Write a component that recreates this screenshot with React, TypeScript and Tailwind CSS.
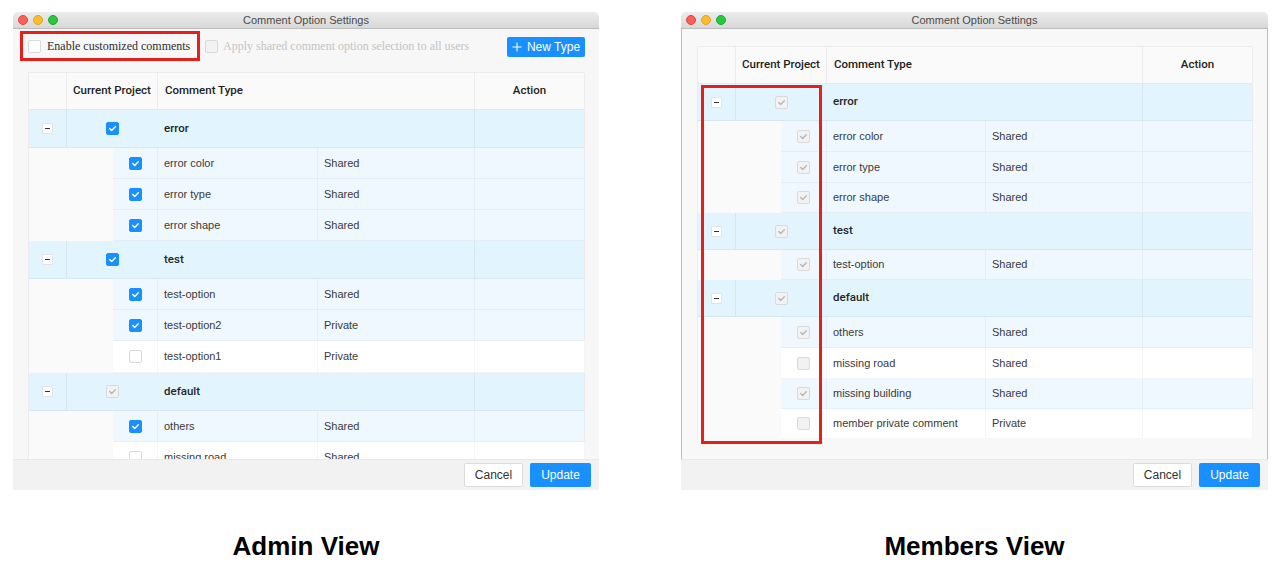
import React from "react";

type CB = "checked" | "unchecked" | "dchecked" | "dunchecked";

const SANS = "font-['Liberation_Sans',Arial,sans-serif]";
const MED = "font-['Roboto','Liberation_Sans',Arial,sans-serif] font-medium";

function Checkbox({ state }: { state: CB }) {
  const cls =
    state === "checked"
      ? "bg-[#1890ff] border-[#1890ff]"
      : state === "unchecked"
      ? "bg-white border-[#d9d9d9]"
      : "bg-[#f2f2f2] border-[#dadada]";
  const showCheck = state === "checked" || state === "dchecked";
  return (
    <span className={`w-[13px] h-[13px] rounded-[2px] border flex items-center justify-center shrink-0 ${cls}`}>
      {showCheck && (
        <svg width="9" height="9" viewBox="0 0 9 9">
          <path
            d="M1.7 4.6 L3.7 6.5 L7.3 2.7"
            fill="none"
            stroke={state === "checked" ? "#ffffff" : "#b8b8b8"}
            strokeWidth="1.4"
            strokeLinecap="round"
            strokeLinejoin="round"
          />
        </svg>
      )}
    </span>
  );
}

function Minus() {
  return (
    <span className="w-[11px] h-[11px] bg-white border border-[#e3e3e3] rounded-[1px] flex items-center justify-center">
      <span className="w-[5px] h-px bg-[#333]" />
    </span>
  );
}

type Widths = { c1: number; c2: number; c3: number; c4: number; c5: number; e: number; cb: number };

type Sub = { name: string; type: string; state: CB; h: number };
type Group = { name: string; state: CB; h: number; subs: Sub[] };

function Table({ w, groups }: { w: Widths; groups: Group[] }) {
  const total = w.c1 + w.c2 + w.c3 + w.c4 + w.c5;
  return (
    <div className={`${SANS} text-[11px] text-[#3a3a3a] border-l border-t border-[#ececec]`} style={{ width: total }}>
      <div className={`flex h-[37px] bg-[#fafafa] border-b border-[#e8e8e8] text-[#222] ${MED} text-[11.5px]`}>
        <div className="border-r border-[#ececec] shrink-0" style={{ width: w.c1 }} />
        <div className="border-r border-[#ececec] shrink-0 flex items-center justify-center" style={{ width: w.c2 }}>
          Current Project
        </div>
        <div className="border-r border-[#ececec] shrink-0 flex items-center pl-[7px]" style={{ width: w.c3 + w.c4 }}>
          Comment Type
        </div>
        <div className="shrink-0 flex items-center justify-center border-r border-[#ececec]" style={{ width: w.c5 }}>
          Action
        </div>
      </div>
      {groups.map((g) => (
        <React.Fragment key={g.name}>
          <div className="flex bg-[#e2f4fd]" style={{ height: g.h }}>
            <div className="border-r border-b border-black/[0.05] shrink-0 flex items-center justify-center" style={{ width: w.c1 }}>
              <Minus />
            </div>
            <div className="border-b border-black/[0.05] shrink-0 flex items-center justify-center" style={{ width: w.c2 }}>
              <Checkbox state={g.state} />
            </div>
            <div className={`border-r border-b border-black/[0.05] shrink-0 flex items-center pl-[6px] text-[#262626] ${MED} text-[11.5px]`} style={{ width: w.c3 + w.c4 }}>
              {g.name}
            </div>
            <div className="border-b border-r border-black/[0.05] shrink-0" style={{ width: w.c5 }} />
          </div>
          {g.subs.map((s) => {
            const bg = s.state === "checked" || s.state === "dchecked" ? "bg-[#eff8fe]" : "bg-white";
            return (
              <div key={s.name} className="flex" style={{ height: s.h }}>
                <div className="bg-[#fafafa] shrink-0" style={{ width: w.e }} />
                <div className={`${bg} border-r border-b border-black/[0.04] shrink-0 flex items-center justify-center`} style={{ width: w.cb }}>
                  <Checkbox state={s.state} />
                </div>
                <div className={`${bg} border-r border-b border-black/[0.04] shrink-0 flex items-center pl-[6px]`} style={{ width: w.c3 }}>
                  {s.name}
                </div>
                <div className={`${bg} border-r border-b border-black/[0.04] shrink-0 flex items-center pl-[6px]`} style={{ width: w.c4 }}>
                  {s.type}
                </div>
                <div className={`${bg} border-r border-b border-black/[0.04] shrink-0`} style={{ width: w.c5 }} />
              </div>
            );
          })}
        </React.Fragment>
      ))}
    </div>
  );
}

function TitleBar() {
  return (
    <div className={`${SANS} h-[17px] shrink-0 grid grid-cols-[1fr_auto_1fr] items-center bg-gradient-to-b from-[#ececec] to-[#d8d8d8] border-b border-[#bcbcbc] rounded-t-[5px]`}>
      <div className="flex items-center gap-[5px] pl-[5px]">
        <span className="w-[10px] h-[10px] rounded-full bg-[#fc5f57] border border-[#e0443e]" />
        <span className="w-[10px] h-[10px] rounded-full bg-[#fdbc2e] border border-[#dea123]" />
        <span className="w-[10px] h-[10px] rounded-full bg-[#28c840] border border-[#1aab29]" />
      </div>
      <div className="text-[11px] text-[#4b4b4b] leading-none">Comment Option Settings</div>
      <div />
    </div>
  );
}

function Footer() {
  return (
    <div className={`${SANS} h-[31px] shrink-0 bg-[#f2f2f2] border-t border-[#e9e9e9] flex items-center justify-end gap-[7px] pr-[8px] text-[12px]`}>
      <button className="h-[24px] w-[59px] bg-white border border-[#dcdcdc] rounded-[2px] text-[#333]">Cancel</button>
      <button className="h-[24px] w-[61px] bg-[#1890ff] rounded-[2px] text-white">Update</button>
    </div>
  );
}

const leftGroups: Group[] = [
  {
    name: "error",
    state: "checked",
    h: 38,
    subs: [
      { name: "error color", type: "Shared", state: "checked", h: 31 },
      { name: "error type", type: "Shared", state: "checked", h: 31 },
      { name: "error shape", type: "Shared", state: "checked", h: 31 },
    ],
  },
  {
    name: "test",
    state: "checked",
    h: 38,
    subs: [
      { name: "test-option", type: "Shared", state: "checked", h: 31 },
      { name: "test-option2", type: "Private", state: "checked", h: 31 },
      { name: "test-option1", type: "Private", state: "unchecked", h: 32 },
    ],
  },
  {
    name: "default",
    state: "dchecked",
    h: 38,
    subs: [
      { name: "others", type: "Shared", state: "checked", h: 31 },
      { name: "missing road", type: "Shared", state: "unchecked", h: 31 },
    ],
  },
];

const rightGroups: Group[] = [
  {
    name: "error",
    state: "dchecked",
    h: 37,
    subs: [
      { name: "error color", type: "Shared", state: "dchecked", h: 31 },
      { name: "error type", type: "Shared", state: "dchecked", h: 31 },
      { name: "error shape", type: "Shared", state: "dchecked", h: 30 },
    ],
  },
  {
    name: "test",
    state: "dchecked",
    h: 37,
    subs: [{ name: "test-option", type: "Shared", state: "dchecked", h: 30 }],
  },
  {
    name: "default",
    state: "dchecked",
    h: 37,
    subs: [
      { name: "others", type: "Shared", state: "dchecked", h: 31 },
      { name: "missing road", type: "Shared", state: "dunchecked", h: 31 },
      { name: "missing building", type: "Shared", state: "dchecked", h: 30 },
      { name: "member private comment", type: "Private", state: "dunchecked", h: 30 },
    ],
  },
];

function AdminWindow() {
  return (
    <div className="w-[586px] h-[478px] flex flex-col">
      <TitleBar />
      <div className="flex-1 bg-[#f7f7f7] flex flex-col min-h-0">
        <div className="h-[43px] shrink-0 flex items-start pt-[2px] pl-[7px] pr-[14px]">
          <div className="h-[30px] w-[180px] border-[3px] border-[#e5201b] flex items-center pl-[5px] gap-[6px]">
            <Checkbox state="unchecked" />
            <span className="font-['Liberation_Serif','Times_New_Roman',serif] text-[12px] text-[#2e2e2e]">Enable customized comments</span>
          </div>
          <div className="h-[30px] ml-[5px] flex items-center gap-[5px]">
            <Checkbox state="dunchecked" />
            <span className="font-['Liberation_Serif','Times_New_Roman',serif] text-[12px] text-[#c4c4c4]">
              Apply shared comment option selection to all users
            </span>
          </div>
          <button className={`${SANS} ml-auto mt-[6px] h-[20px] w-[78px] bg-[#1890ff] rounded-[2px] text-white text-[12px] flex items-center justify-center gap-[5px]`}>
            <svg width="10" height="10" viewBox="0 0 10 10">
              <path d="M5 0.5 V9.5 M0.5 5 H9.5" stroke="#fff" strokeWidth="1.1" />
            </svg>
            New Type
          </button>
        </div>
        <div className="flex-1 min-h-0 overflow-hidden pl-[15px]">
          <Table w={{ c1: 38, c2: 91, c3: 160, c4: 157, c5: 110, e: 84, cb: 45 }} groups={leftGroups} />
        </div>
      </div>
      <Footer />
    </div>
  );
}

function MemberWindow() {
  return (
    <div className="w-[587px] h-[478px] flex flex-col">
      <TitleBar />
      <div className="flex-1 bg-[#f8f8f8] border-x border-[#bdbdbd] flex flex-col min-h-0 pt-[17px] pl-[15px]">
        <div className="relative w-fit">
          <Table w={{ c1: 38, c2: 91, c3: 159, c4: 157, c5: 110, e: 83, cb: 46 }} groups={rightGroups} />
          <div className="absolute left-[4px] top-[39px] w-[121px] h-[359px] border-[3px] border-[#e5201b]" />
        </div>
      </div>
      <Footer />
    </div>
  );
}

export default function App() {
  return (
    <div className="w-[1283px] h-[572px] bg-white flex pt-[12px] pl-[13px] gap-[82px] overflow-hidden">
      <div className="flex flex-col items-center">
        <AdminWindow />
        <div className={`${SANS} mt-[43px] text-[26px] leading-[26px] font-bold text-black`}>Admin View</div>
      </div>
      <div className="flex flex-col items-center">
        <MemberWindow />
        <div className={`${SANS} mt-[43px] text-[26px] leading-[26px] font-bold text-black`}>Members View</div>
      </div>
    </div>
  );
}
